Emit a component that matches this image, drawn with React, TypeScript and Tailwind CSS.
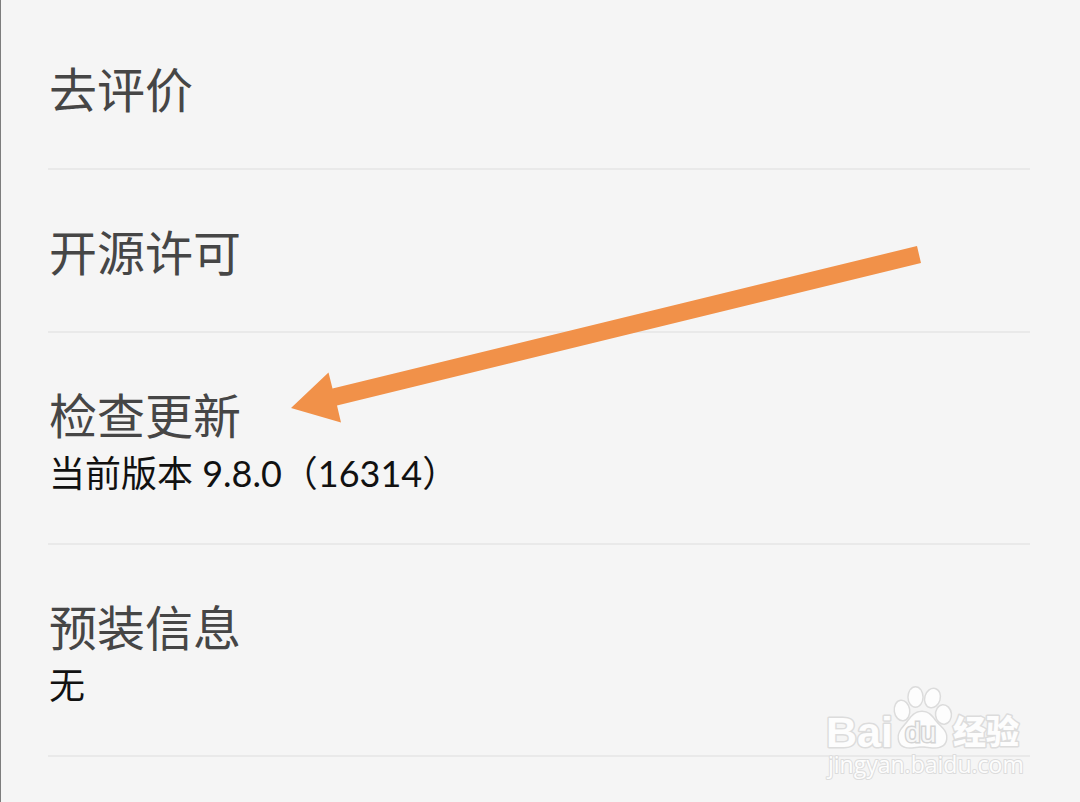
type Item = { title: string; detail?: string };

const items: Item[] = [
  { title: '去评价' },
  { title: '开源许可' },
  { title: '检查更新', detail: '当前版本 9.8.0（16314）' },
  { title: '预装信息', detail: '无' },
];

function SettingRow({ title, detail }: Item) {
  return (
    <li className="border-b-2 border-[#e9e9e9]">
      <button type="button" className="block w-full px-px pt-[50px] pb-[45px] text-left">
        <span className="block text-[48px] leading-[66px] text-[#464646]">{title}</span>
        {detail && (
          <span className="block text-[36px] leading-[49px] text-[#111111]">{detail}</span>
        )}
      </button>
    </li>
  );
}

function Arrow() {
  return (
    <svg
      className="pointer-events-none absolute top-[240px] left-[284px] h-[190px] w-[645px]"
      viewBox="285 240 645 190"
      aria-hidden="true"
    >
      <path
        d="M291 408 L328.500 372.500 L332.500 388.500 L917 246 L921 263 L337 405.500 L341 422.500 Z"
        fill="#f19149"
      />
    </svg>
  );
}

function Watermark() {
  return (
    <svg
      className="pointer-events-none absolute top-[680px] left-[819px] h-[104px] w-[212px]"
      viewBox="820 680 212 104"
      role="img"
      aria-label="Baidu 经验"
    >
      <g fill="#fdfdfd" stroke="#dcdcdc" strokeWidth="3" paintOrder="stroke" strokeLinejoin="round">
        <text x="826" y="747" fontSize="43" fontWeight="700" fontFamily="'Liberation Sans', sans-serif">
          Bai
        </text>
        <ellipse cx="902" cy="710.500" rx="7" ry="9.500" transform="rotate(-8 902 710.500)" />
        <ellipse cx="915.500" cy="697" rx="6.800" ry="9.500" />
        <ellipse cx="932.500" cy="698" rx="7" ry="9.200" transform="rotate(16 932.500 698)" />
        <ellipse cx="943.500" cy="714.500" rx="7.200" ry="9" transform="rotate(-6 943.500 714.500)" />
        <path d="M922 712 C929 712 932 717 936 722 C941 728 947 731 946 739 C945 747 937 748 930 747 C924 746 920 746 914 747 C907 748 900 747 899 739 C898 732 903 728 907 723 C911 718 914 712 922 712 Z" />
        <text x="953" y="744" fontSize="33" fontWeight="900" fontFamily="'Noto Sans CJK SC', sans-serif">
          经验
        </text>
        <text x="828" y="773" fontSize="23" strokeWidth="2" fontFamily="'Open Sans', sans-serif">
          jingyan.baidu.com
        </text>
      </g>
      <text
        x="905"
        y="742"
        fontSize="28"
        fontFamily="'Liberation Sans', sans-serif"
        fill="#f7f7f7"
        stroke="#d4d4d4"
        strokeWidth="3"
        paintOrder="stroke"
      >
        du
      </text>
    </svg>
  );
}

export default function App() {
  return (
    <main
      lang="zh-CN"
      className="relative min-h-screen overflow-hidden border-l border-[#7d7d7d] bg-[#f5f5f5] pt-[7px] pr-[50px] pl-[47px] font-['Lato','Noto_Sans_CJK_SC',sans-serif]"
    >
      <ul>
        {items.map((item) => (
          <SettingRow key={item.title} {...item} />
        ))}
      </ul>
      <Arrow />
      <Watermark />
    </main>
  );
}
